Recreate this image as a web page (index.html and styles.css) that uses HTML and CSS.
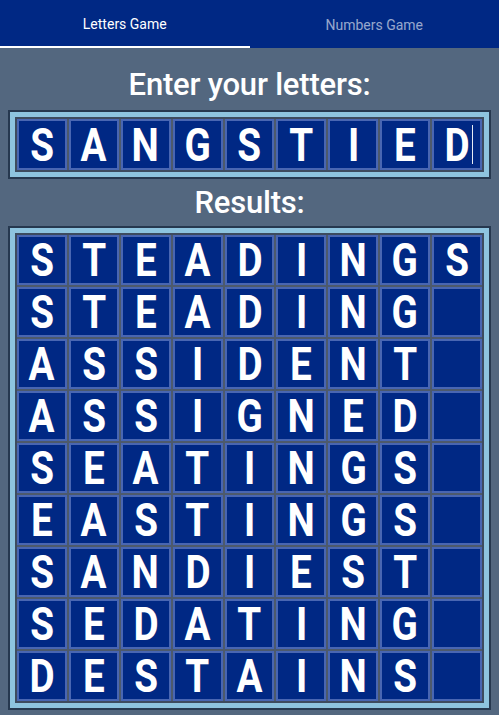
FILE: index.html
```html
<!DOCTYPE html>
<html>
<head>
<meta charset="utf-8">
<link rel="stylesheet" href="styles.css">
</head>
<body>
<nav class="tabs">
  <div class="tab active">Letters Game</div>
  <div class="tab">Numbers Game</div>
</nav>
<main class="main">
  <h2 class="heading first">Enter your letters:</h2>
  <div class="frame">
    <div class="grid input">
      <div class="tile"><span class="ch">S</span></div><div class="tile"><span class="ch">A</span></div><div class="tile"><span class="ch">N</span></div><div class="tile"><span class="ch">G</span></div><div class="tile"><span class="ch">S</span></div><div class="tile"><span class="ch">T</span></div><div class="tile"><span class="ch">I</span></div><div class="tile"><span class="ch">E</span></div><div class="tile"><span class="ch">D</span><span class="cursor"></span></div>
    </div>
  </div>
  <h2 class="heading">Results:</h2>
  <div class="frame">
    <div class="grid">
      <div class="tile"><span class="ch">S</span></div><div class="tile"><span class="ch">T</span></div><div class="tile"><span class="ch">E</span></div><div class="tile"><span class="ch">A</span></div><div class="tile"><span class="ch">D</span></div><div class="tile"><span class="ch">I</span></div><div class="tile"><span class="ch">N</span></div><div class="tile"><span class="ch">G</span></div><div class="tile"><span class="ch">S</span></div>
      <div class="tile"><span class="ch">S</span></div><div class="tile"><span class="ch">T</span></div><div class="tile"><span class="ch">E</span></div><div class="tile"><span class="ch">A</span></div><div class="tile"><span class="ch">D</span></div><div class="tile"><span class="ch">I</span></div><div class="tile"><span class="ch">N</span></div><div class="tile"><span class="ch">G</span></div><div class="tile"></div>
      <div class="tile"><span class="ch">A</span></div><div class="tile"><span class="ch">S</span></div><div class="tile"><span class="ch">S</span></div><div class="tile"><span class="ch">I</span></div><div class="tile"><span class="ch">D</span></div><div class="tile"><span class="ch">E</span></div><div class="tile"><span class="ch">N</span></div><div class="tile"><span class="ch">T</span></div><div class="tile"></div>
      <div class="tile"><span class="ch">A</span></div><div class="tile"><span class="ch">S</span></div><div class="tile"><span class="ch">S</span></div><div class="tile"><span class="ch">I</span></div><div class="tile"><span class="ch">G</span></div><div class="tile"><span class="ch">N</span></div><div class="tile"><span class="ch">E</span></div><div class="tile"><span class="ch">D</span></div><div class="tile"></div>
      <div class="tile"><span class="ch">S</span></div><div class="tile"><span class="ch">E</span></div><div class="tile"><span class="ch">A</span></div><div class="tile"><span class="ch">T</span></div><div class="tile"><span class="ch">I</span></div><div class="tile"><span class="ch">N</span></div><div class="tile"><span class="ch">G</span></div><div class="tile"><span class="ch">S</span></div><div class="tile"></div>
      <div class="tile"><span class="ch">E</span></div><div class="tile"><span class="ch">A</span></div><div class="tile"><span class="ch">S</span></div><div class="tile"><span class="ch">T</span></div><div class="tile"><span class="ch">I</span></div><div class="tile"><span class="ch">N</span></div><div class="tile"><span class="ch">G</span></div><div class="tile"><span class="ch">S</span></div><div class="tile"></div>
      <div class="tile"><span class="ch">S</span></div><div class="tile"><span class="ch">A</span></div><div class="tile"><span class="ch">N</span></div><div class="tile"><span class="ch">D</span></div><div class="tile"><span class="ch">I</span></div><div class="tile"><span class="ch">E</span></div><div class="tile"><span class="ch">S</span></div><div class="tile"><span class="ch">T</span></div><div class="tile"></div>
      <div class="tile"><span class="ch">S</span></div><div class="tile"><span class="ch">E</span></div><div class="tile"><span class="ch">D</span></div><div class="tile"><span class="ch">A</span></div><div class="tile"><span class="ch">T</span></div><div class="tile"><span class="ch">I</span></div><div class="tile"><span class="ch">N</span></div><div class="tile"><span class="ch">G</span></div><div class="tile"></div>
      <div class="tile"><span class="ch">D</span></div><div class="tile"><span class="ch">E</span></div><div class="tile"><span class="ch">S</span></div><div class="tile"><span class="ch">T</span></div><div class="tile"><span class="ch">A</span></div><div class="tile"><span class="ch">I</span></div><div class="tile"><span class="ch">N</span></div><div class="tile"><span class="ch">S</span></div><div class="tile"></div>
    </div>
  </div>
</main>
</body>
</html>
```

FILE: styles.css
```css
html, body {
  margin: 0;
  padding: 0;
  background: #53677f;
  font-family: Roboto, "Liberation Sans", sans-serif;
}
.tabs {
  display: flex;
  height: 48px;
  background: #002884;
}
.tab {
  flex: 1;
  display: flex;
  align-items: center;
  justify-content: center;
  font-size: 14px;
  color: rgba(255, 255, 255, 0.6);
  box-sizing: border-box;
  padding-top: 2px;
}
.tab.active {
  color: #ffffff;
  border-bottom: 2px solid #ffffff;
}
.main {
  padding: 0 8px;
}
.heading {
  margin: 7px 0 7px;
  text-align: center;
  color: #ffffff;
  font-size: 31px;
  font-weight: 500;
  line-height: 33px;
  letter-spacing: -0.2px;
}
.heading.first {
  margin: 20px 0 9px;
}
.frame {
  border: 2px solid #26384f;
  background: #8ec4df;
  padding: 5px;
}
.grid {
  display: grid;
  grid-template-columns: repeat(9, 1fr);
  grid-auto-rows: 50px;
  gap: 2px;
  border: 2px solid #3d4b5f;
  background: #4d5a6c;
}
.grid.input {
  grid-auto-rows: 51px;
}
.tile {
  position: relative;
  box-sizing: border-box;
  background: #002884;
  border: 2px solid #4966b2;
  color: #ffffff;
  display: flex;
  align-items: center;
  justify-content: center;
}
.ch {
  display: inline-block;
  font-size: 46px;
  font-weight: 700;
  line-height: 1;
  transform: scaleX(0.84);
}
.cursor {
  position: absolute;
  right: 7px;
  top: 4px;
  bottom: 4px;
  width: 1px;
  background: #e8ecf4;
}
```
